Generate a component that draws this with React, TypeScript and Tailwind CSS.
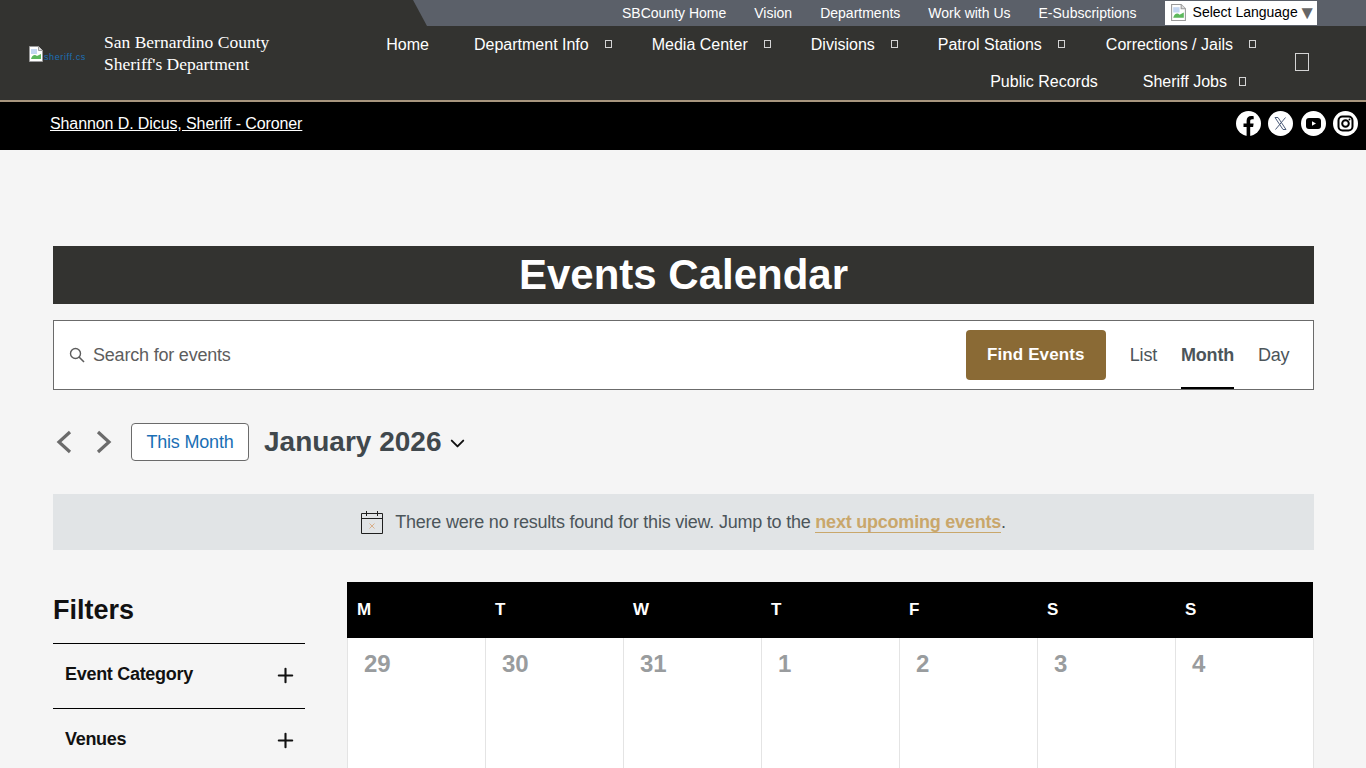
import React from 'react';
import { ChevronDown, Plus } from 'lucide-react';

const topLinks = ['SBCounty Home', 'Vision', 'Departments', 'Work with Us', 'E-Subscriptions'];
const days = ['M', 'T', 'W', 'T', 'F', 'S', 'S'];
const dates = ['29', '30', '31', '1', '2', '3', '4'];

// missing icon-font glyph, shows up as a little box on the real site
function Tofu({ className }: { className: string }) {
  return <span className={`inline-block border border-[#d4d4d4] ${className}`} />;
}

function NavItem({ label, box, ml }: { label: string; box?: boolean; ml: string }) {
  return (
    <a className={`flex items-center text-white text-[16px] ${ml}`}>
      {label}
      {box && <Tofu className="w-[7px] h-[8px] ml-[16px] mb-[1px]" />}
    </a>
  );
}

function BrokenImage({ size = 16 }: { size?: number }) {
  return (
    <svg width={size} height={size} viewBox="0 0 16 16" className="shrink-0">
      <path d="M1.5 .5h9l4 4v11h-13z" fill="#fff" stroke="#9a9a9a" />
      <path d="M10.5 .5v4h4" fill="#ddd" stroke="#9a9a9a" />
      <path d="M3 3h6v5H3z" fill="#c4d7f2" />
      <path d="M3 13c1-4 4-5 6-3l4-2v5z" fill="#5cb85c" />
    </svg>
  );
}

function Socials() {
  return (
    <div className="flex items-center gap-[7.5px] mr-[8px] mb-[5px]">
      <svg width="25" height="25" viewBox="0 0 25 25">
        <circle cx="12.5" cy="12.5" r="12.5" fill="#fff" />
        <path d="M10.6 25v-9H7.5v-3.5h3.1V9.8c0-3.1 1.8-4.8 4.6-4.8 1.3 0 2.5.2 2.5.2v3h-1.5c-1.5 0-2 .9-2 1.9v2.4h3.4l-.5 3.5h-2.9v9z" fill="#000" />
      </svg>
      <svg width="25" height="25" viewBox="0 0 25 25">
        <circle cx="12.5" cy="12.5" r="12.5" fill="#fff" />
        <path d="M7 6.5h3l8 12h-3zM17.5 6.5l-10 12" fill="none" stroke="#4a5a78" strokeWidth="1" />
      </svg>
      <svg width="25" height="25" viewBox="0 0 25 25">
        <circle cx="12.5" cy="12.5" r="12.5" fill="#fff" />
        <rect x="5" y="7" width="15" height="11" rx="3" fill="#000" />
        <path d="M11 10.3l4 2.2-4 2.2z" fill="#fff" />
      </svg>
      <svg width="25" height="25" viewBox="0 0 25 25">
        <circle cx="12.5" cy="12.5" r="12.5" fill="#fff" />
        <rect x="5.5" y="5.5" width="14" height="14" rx="4" fill="none" stroke="#000" strokeWidth="2" />
        <circle cx="12.5" cy="12.5" r="3.3" fill="none" stroke="#000" strokeWidth="2" />
        <circle cx="16.5" cy="8.5" r="1" fill="#000" />
      </svg>
    </div>
  );
}

function Header() {
  return (
    <header className="bg-[#333330] border-b-2 border-[#a8967e] h-[102px] flex flex-col">
      <div className="flex justify-end h-[26px]">
        <div className="w-[953px] h-[26px] bg-[#5b6069] [clip-path:polygon(0_0,100%_0,100%_100%,14px_100%)] flex items-center pl-[209px]">
          {topLinks.map((link) => (
            <a key={link} className="text-white text-[14px] mr-[28px] whitespace-nowrap">{link}</a>
          ))}
          <div className="bg-white shrink-0 w-[152px] h-[24px] pb-[2px] flex items-center pl-[5px] text-[14px] text-black">
            <BrokenImage size={17} />
            <span className="ml-[6px] whitespace-nowrap">Select Language</span>
            <span className="text-[#666] text-[19px] leading-none">▼</span>
          </div>
        </div>
      </div>
      <div className="flex flex-1">
        <div className="w-[104px] pl-[28px] pt-[20px]">
          <div className="flex items-end h-[16px]">
            <BrokenImage />
            <span className="text-[#1c6fb5] text-[9px] leading-none tracking-[0.6px]">sheriff.cs</span>
          </div>
        </div>
        <div className="w-[260px] pt-[5px] font-['Liberation_Serif',serif] text-white text-[17.5px] leading-[22px]">
          <div>San Bernardino County</div>
          <div>Sheriff's Department</div>
        </div>
        <nav className="w-[892px]">
          <div className="flex justify-end h-[37px] items-center">
            <NavItem label="Home" ml="" />
            <NavItem label="Department Info" box ml="ml-[45px]" />
            <NavItem label="Media Center" box ml="ml-[40px]" />
            <NavItem label="Divisions" box ml="ml-[40px]" />
            <NavItem label="Patrol Stations" box ml="ml-[40px]" />
            <NavItem label="Corrections / Jails" box ml="ml-[41px]" />
          </div>
          <div className="flex justify-end h-[37px] items-center pr-[10px]">
            <NavItem label="Public Records" ml="" />
            <NavItem label="Sheriff Jobs" ml="ml-[45px]" />
            <Tofu className="w-[7px] h-[9px] ml-[12px]" />
          </div>
        </nav>
        <div className="flex-1 flex items-center pl-[39px]">
          <Tofu className="w-[14px] h-[18px] mb-[2px]" />
        </div>
      </div>
    </header>
  );
}

function SearchBar() {
  return (
    <div className="mt-[16px] h-[70px] border border-[#6b6b6b] bg-white flex items-center pl-[15px] pr-[25px]">
      <svg width="16" height="16" viewBox="0 0 16 16" fill="none">
        <circle cx="6.5" cy="6.5" r="5" stroke="#5d5d5d" strokeWidth="1.4" />
        <path d="M10 10l5 5" stroke="#5d5d5d" strokeWidth="1.6" />
      </svg>
      <span className="ml-[8px] text-[18px] tracking-[-0.2px] text-[#5d5d5d]">Search for events</span>
      <button className="ml-auto w-[140px] h-[50px] bg-[#8a6a35] rounded-[4px] text-white text-[17px] tracking-[0.1px] font-bold">Find Events</button>
      <div className="flex h-full ml-[24px] text-[18px] tracking-[-0.2px] text-[#4c555a]">
        <span className="flex items-center">List</span>
        <span className="flex items-center ml-[24px] font-bold border-y-2 border-t-transparent border-b-black">Month</span>
        <span className="flex items-center ml-[24px] w-[30px] whitespace-nowrap">Day</span>
      </div>
    </div>
  );
}

function MonthNav() {
  return (
    <div className="mt-[33px] h-[38px] flex items-center">
      <svg width="16" height="24" viewBox="0 0 16 24" fill="none" className="ml-[3px]">
        <path d="M14 2 3 12l11 10" stroke="#6b6b6b" strokeWidth="3.2" />
      </svg>
      <svg width="16" height="24" viewBox="0 0 16 24" fill="none" className="ml-[24px]">
        <path d="m2 2 11 10L2 22" stroke="#6b6b6b" strokeWidth="3.2" />
      </svg>
      <button className="ml-[19px] w-[118px] h-[38px] bg-white border border-[#6b6b6b] rounded-[4px] text-[#1a6fb5] text-[18px] tracking-[-0.2px]">This Month</button>
      <span className="ml-[15px] text-[28px] font-bold text-[#40484d]">January 2026</span>
      <ChevronDown size={23} strokeWidth={2} className="ml-[5px] mt-[2px] text-[#111]" />
    </div>
  );
}

function Notice() {
  return (
    <div className="mt-[33px] h-[56px] bg-[#e1e4e6] flex items-center justify-center text-[18px] tracking-[-0.22px] text-[#4c555a]">
      <svg width="22" height="24" viewBox="0 0 22 24" fill="none" className="mr-[12px]">
        <path d="M.5 3.5h21v20H.5zM.5 8.5h21M5.5 1v5M16.5 1v5" stroke="#1f1f1f" />
        <path d="M8.5 13.5l5 5M13.5 13.5l-5 5" stroke="#d8b08c" />
      </svg>
      <span>
        There were no results found for this view. Jump to the{' '}
        <a className="font-bold text-[#c9a76b] border-b border-[#c9a76b]">next upcoming events</a>.
      </span>
    </div>
  );
}

function FilterRow({ label }: { label: string }) {
  return (
    <div className="h-[65px] border-t border-black flex items-center justify-between pl-[12px] pr-[8px]">
      <span className="mb-[4px] text-[18px] tracking-[-0.3px] font-bold text-[#111]">{label}</span>
      <Plus size={23} strokeWidth={2.2} className="text-[#111] mb-[1px]" />
    </div>
  );
}

export default function App() {
  return (
    <div className="h-[768px] overflow-hidden bg-[#f5f5f5] font-['Liberation_Sans',Arial,sans-serif]">
      <Header />
      <div className="h-[48px] bg-black flex items-center justify-between pl-[50px]">
        <a className="mb-[5px] text-white text-[16px] underline tracking-[-0.1px]">Shannon D. Dicus, Sheriff - Coroner</a>
        <Socials />
      </div>
      <main className="pt-[96px] pl-[53px] pr-[52px]">
        <h1 className="h-[58px] pb-[2px] bg-[#333330] text-white text-[42px] font-bold flex items-center justify-center">Events Calendar</h1>
        <SearchBar />
        <MonthNav />
        <Notice />
        <div className="mt-[32px] flex">
          <aside className="w-[252px] shrink-0">
            <h2 className="h-[61px] pt-[8px] text-[27px] font-bold text-[#111]">Filters</h2>
            <FilterRow label="Event Category" />
            <FilterRow label="Venues" />
          </aside>
          <section className="ml-[42px] w-[967px]">
            <div className="grid grid-cols-[repeat(7,138px)] h-[56px] bg-black w-[966px]">
              {days.map((d, i) => (
                <div key={i} className="flex items-center pl-[10px] text-white text-[17px] font-bold">{d}</div>
              ))}
            </div>
            <div className="grid grid-cols-[repeat(7,138px)] h-[200px] bg-white border-r border-[#e4e4e4]">
              {dates.map((d) => (
                <div key={d} className="border-l border-[#e4e4e4] pl-[16px] pt-[8px] text-[24px] font-bold text-[#999c9e]">{d}</div>
              ))}
            </div>
          </section>
        </div>
      </main>
    </div>
  );
}
